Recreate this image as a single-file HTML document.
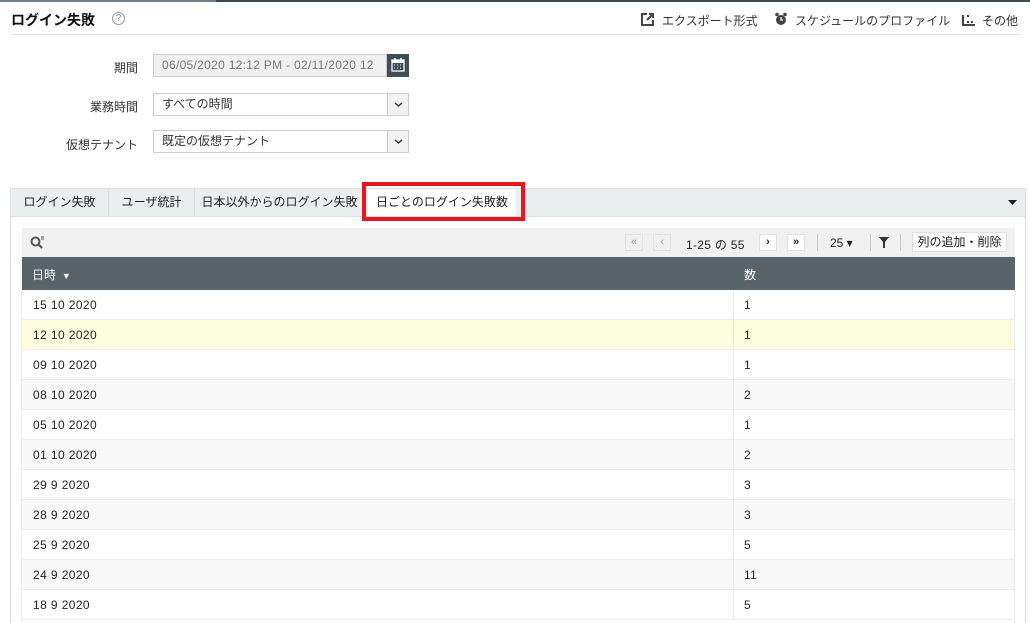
<!DOCTYPE html>
<html style="width:1030px;height:623px;overflow:hidden"><head><meta charset="utf-8"><style>
*{margin:0;padding:0;box-sizing:border-box}
body{width:1030px;height:623px;overflow:hidden;background:#fff;font-family:"Liberation Sans","Noto Sans CJK JP",sans-serif;font-size:12px;color:#222;position:relative}
.abs{position:absolute}
.topline{left:0;top:0;width:1030px;height:2px;background:#3d4a52}
.topline i{position:absolute;top:0;height:2px;left:0;width:216px;background:#6a7f8a}
.title{left:11px;top:10px;font-size:14px;font-weight:bold;color:#111}
.help{left:112px;top:12px;width:13px;height:13px;border:1px solid #999;border-radius:50%;font-size:10px;color:#888;text-align:center;line-height:11px}
.hr{left:10px;top:34px;width:1010px;height:1px;background:#e2e2e2}
.act{top:12px;color:#333;font-size:12px}
.lbl{text-align:right;width:120px;left:18px;color:#333}
.inp{left:153px;height:23px;border:1px solid #ccc;padding-left:8px;line-height:21px;color:#333}
.dd{position:absolute;right:0;top:0;width:21px;height:21px;border-left:1px solid #ccc;background:#f2f2f2}
.tabs{left:10px;top:188px;width:1016px;height:29px;background:#ebeeef;border:1px solid #dcdfe0}
.tab{position:absolute;top:0;height:27px;line-height:26px;border-right:1px solid #d6d9da;color:#222;text-align:center}
.frame{left:10px;top:216px;width:1016px;height:420px;border-left:1px solid #dcdfe0;border-right:1px solid #dcdfe0}
.tool{left:22px;top:228px;width:993px;height:29px;background:#f0f0f0}
.pb{position:absolute;top:6px;width:18px;height:17px;border:1px solid #e2e2e2;text-align:center;font-size:11px;font-weight:bold;line-height:15px}
.hdr{left:22px;top:257px;width:993px;height:33px;background:#58636a;color:#fff}
.row{position:absolute;left:22px;width:993px;height:30px;border-bottom:1px solid #ececec;line-height:31px;letter-spacing:0.4px}
.row span{position:absolute;left:11px}
.row b{position:absolute;left:722px;font-weight:normal}
.row:before{content:"";position:absolute;left:711px;top:0;width:1px;height:30px;background:#ececec}
</style></head><body>
<div class="abs topline"><i></i></div>
<div class="abs title">ログイン失敗</div>
<div class="abs help">?</div>
<div class="abs hr"></div>
<svg class="abs" style="left:641px;top:13px" width="13" height="13" viewBox="0 0 13 13"><path d="M6 1H1v11h11V7" fill="none" stroke="#444" stroke-width="2"/><path d="M8 1h4v4M12 1L6 7" fill="none" stroke="#444" stroke-width="2"/></svg>
<div class="abs act" style="left:662px">エクスポート形式</div>
<svg class="abs" style="left:774px;top:12px" width="14" height="14" viewBox="0 0 14 14"><circle cx="7" cy="8" r="5" fill="#444"/><circle cx="3" cy="2.5" r="1.8" fill="#444"/><circle cx="11" cy="2.5" r="1.8" fill="#444"/><path d="M7 5v3h2" stroke="#fff" stroke-width="1.2" fill="none"/></svg>
<div class="abs act" style="left:795px">スケジュールのプロファイル</div>
<svg class="abs" style="left:962px;top:14px" width="14" height="12" viewBox="0 0 14 12"><path d="M1 1v10h12" fill="none" stroke="#444" stroke-width="2"/><rect x="5" y="7" width="2" height="2" fill="#444"/><rect x="9" y="7" width="2" height="2" fill="#444"/><rect x="5" y="1" width="2" height="2" fill="#444"/></svg>
<div class="abs act" style="left:982px">その他</div>

<div class="abs lbl" style="top:59px">期間</div>
<div class="abs inp" style="top:54px;width:234px;background:#f0f0f0;color:#777;overflow:hidden;white-space:nowrap;letter-spacing:0.3px">06/05/2020 12:12 PM - 02/11/2020 12</div>
<div class="abs" style="left:387px;top:54px;width:22px;height:23px;background:#3f4d55"><svg width="22" height="23"><rect x="5" y="6" width="12" height="11" fill="none" stroke="#fff" stroke-width="1.3"/><rect x="5" y="6" width="12" height="3" fill="#fff"/><path d="M7 11h1M10 11h1M13 11h1M7 14h1M10 14h1M13 14h1" stroke="#fff"/><path d="M8 4v3M14 4v3" stroke="#fff" stroke-width="1.5"/></svg></div>
<div class="abs lbl" style="top:98px">業務時間</div>
<div class="abs inp" style="top:93px;width:256px">すべての時間<div class="dd"><svg width="21" height="21"><path d="M7 9l3.5 3 3.5-3" fill="none" stroke="#444" stroke-width="1.5"/></svg></div></div>
<div class="abs lbl" style="top:136px">仮想テナント</div>
<div class="abs inp" style="top:130px;width:256px">既定の仮想テナント<div class="dd"><svg width="21" height="21"><path d="M7 9l3.5 3 3.5-3" fill="none" stroke="#444" stroke-width="1.5"/></svg></div></div>

<div class="abs tabs">
<div class="tab" style="left:0;width:98px">ログイン失敗</div>
<div class="tab" style="left:98px;width:86px">ユーザ統計</div>
<div class="tab" style="left:184px;width:170px">日本以外からのログイン失敗</div>
<div class="tab" style="left:357px;width:148px;background:#fff;border-right:none">日ごとのログイン失敗数</div>
<svg style="position:absolute;right:8px;top:11px" width="9" height="5"><path d="M0 0h9L4.5 5z" fill="#222"/></svg>
</div>
<div class="abs" style="left:362px;top:182px;width:163px;height:39px;border:4px solid #e8161f"></div>
<div class="abs frame"></div>
<div class="abs tool">
<svg style="position:absolute;left:8px;top:8px" width="16" height="14"><circle cx="5.5" cy="5.5" r="4" fill="none" stroke="#555" stroke-width="2"/><path d="M8.5 8.5l3.5 3.5" stroke="#555" stroke-width="2.2"/><path d="M11 1h3M11 3h3" stroke="#555"/></svg>
<div class="pb" style="left:603px;color:#aaa">«</div>
<div class="pb" style="left:631px;color:#aaa">‹</div>
<div style="position:absolute;left:664px;top:8px;letter-spacing:0.3px">1-25 の 55</div>
<div class="pb" style="left:737px;background:#fff">›</div>
<div class="pb" style="left:765px;background:#fff">»</div>
<div style="position:absolute;left:795px;top:6px;width:1px;height:17px;background:#ccc"></div>
<div style="position:absolute;left:808px;top:8px">25 ▾</div>
<div style="position:absolute;left:848px;top:6px;width:1px;height:17px;background:#ccc"></div>
<svg style="position:absolute;left:857px;top:9px" width="10" height="11"><path d="M0 0h10L6 5v6H4V5z" fill="#333"/></svg>
<div style="position:absolute;left:878px;top:6px;width:1px;height:17px;background:#ccc"></div>
<div style="position:absolute;left:890px;top:4px;width:95px;height:20px;background:#fff;border:1px solid #e0e0e0;text-align:center;line-height:18px">列の追加・削除</div>
</div>
<div class="abs hdr"><span style="position:absolute;left:10px;top:9px">日時 <span style="font-size:9px">&nbsp;▼</span></span><span style="position:absolute;left:722px;top:9px">数</span></div>
<div class="row" style="top:290px;background:#fff"><span>15 10 2020</span><b>1</b></div>
<div class="row" style="top:320px;background:#fdfde0"><span>12 10 2020</span><b>1</b></div>
<div class="row" style="top:350px;background:#fff"><span>09 10 2020</span><b>1</b></div>
<div class="row" style="top:380px;background:#f8f8f8"><span>08 10 2020</span><b>2</b></div>
<div class="row" style="top:410px;background:#fff"><span>05 10 2020</span><b>1</b></div>
<div class="row" style="top:440px;background:#f8f8f8"><span>01 10 2020</span><b>2</b></div>
<div class="row" style="top:470px;background:#fff"><span>29 9 2020</span><b>3</b></div>
<div class="row" style="top:500px;background:#f8f8f8"><span>28 9 2020</span><b>3</b></div>
<div class="row" style="top:530px;background:#fff"><span>25 9 2020</span><b>5</b></div>
<div class="row" style="top:560px;background:#f8f8f8"><span>24 9 2020</span><b>11</b></div>
<div class="row" style="top:590px;background:#fff"><span>18 9 2020</span><b>5</b></div>
<div class="abs" style="left:21px;top:290px;width:1px;height:333px;background:#ececec"></div>
<div class="abs" style="left:1014px;top:290px;width:1px;height:333px;background:#ececec"></div>
</body></html>
